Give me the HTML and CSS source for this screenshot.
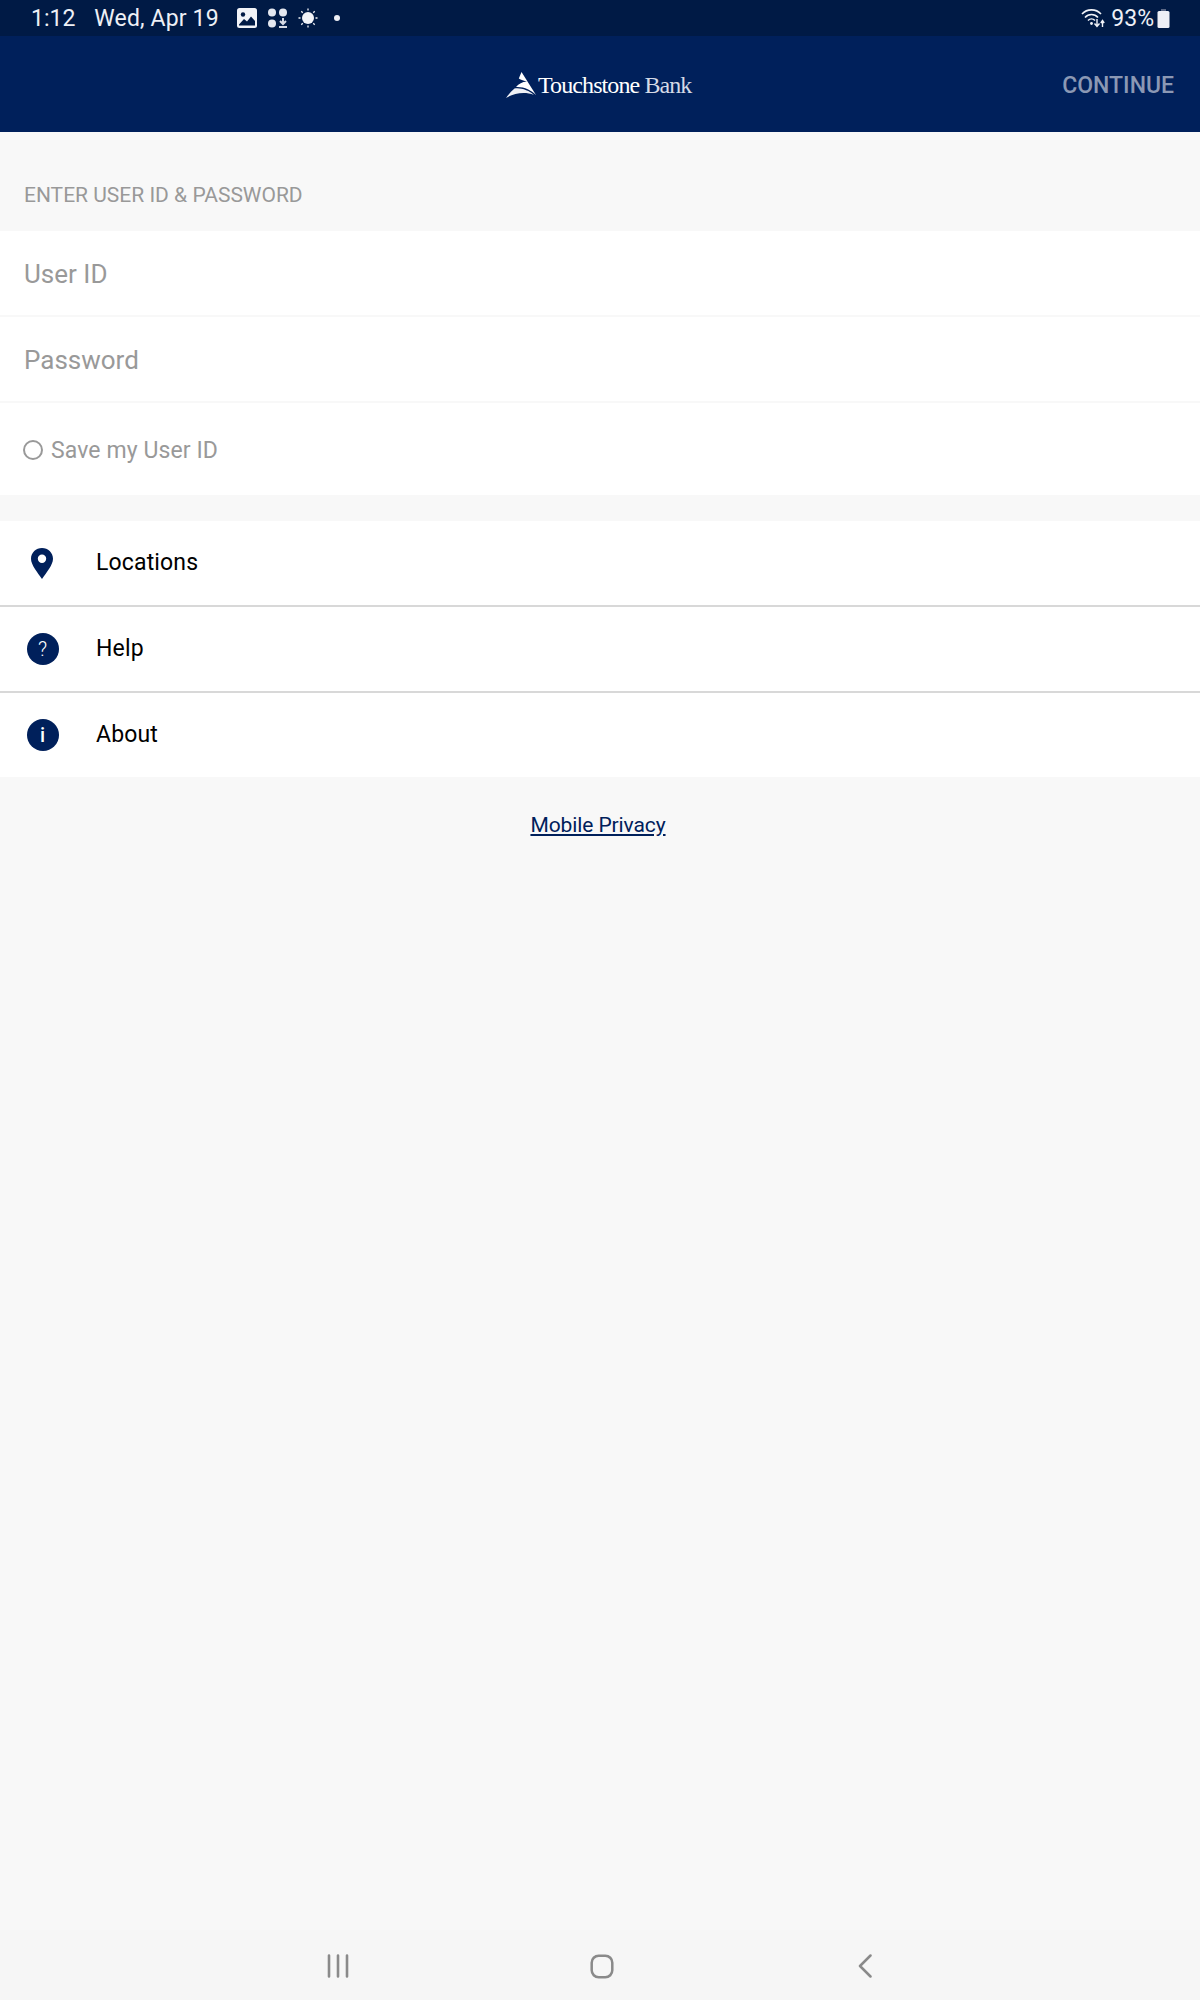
FILE: index.html
```html
<!DOCTYPE html>
<html>
<head>
    <title>Touchstone Bank</title>
    <link rel="stylesheet" href="styles.css">
</head>
<body>
    <div class="status-bar">
        <span class="status-time">1:12</span>
        <span class="status-date">Wed, Apr 19</span>
        <svg class="status-icon icon-gallery" width="20" height="20" viewBox="0 0 20 20">
            <rect width="20" height="20" rx="2.5" fill="#f1f3f8"/>
            <circle cx="6" cy="6.5" r="2.2" fill="#001a45"/>
            <path d="M2 16.5 L7 11 L10 13.5 L14 8.5 L18 13 V17.5 H2 Z" fill="#001a45"/>
        </svg>
        <svg class="status-icon icon-apps" width="21" height="20" viewBox="0 0 21 20">
            <circle cx="5" cy="4.5" r="4" fill="#e4e8f0"/>
            <circle cx="16" cy="4.5" r="4" fill="#e4e8f0"/>
            <circle cx="5" cy="15.5" r="4" fill="#e4e8f0"/>
            <path d="M16 10 V15 M13 13 L16 16 L19 13 M12 19 H20" stroke="#d5dae5" stroke-width="2" fill="none"/>
        </svg>
        <svg class="status-icon icon-sun" width="20" height="20" viewBox="0 0 20 20">
            <circle cx="10" cy="10" r="6" fill="#f1f3f8"/>
            <path d="M10 0.5 V2.5 M10 17.5 V19.5 M0.5 10 H2.5 M17.5 10 H19.5 M3.3 3.3 L4.7 4.7 M15.3 15.3 L16.7 16.7 M3.3 16.7 L4.7 15.3 M15.3 4.7 L16.7 3.3" stroke="#f1f3f8" stroke-width="1.3"/>
        </svg>
        <span class="status-dot"></span>
        <span class="status-spacer"></span>
        <svg class="status-icon" width="24" height="20" viewBox="0 0 24 20">
            <path d="M1 6 C6 0.5 15 0.5 20 6 M4 9.5 C7.5 5.5 13.5 5.5 17 9.5 M7 12.5 C9 10.5 12 10.5 14 12.5" stroke="#f1f3f8" stroke-width="1.6" fill="none"/>
            <circle cx="10.5" cy="15.5" r="1.4" fill="#f1f3f8"/>
            <path d="M16 11 V18 M13.5 15.5 L16 18.5 L18.5 15.5" stroke="#f1f3f8" stroke-width="1.4" fill="none"/>
            <path d="M21.5 19 V13 M19.8 15 L21.5 12.5 L23.2 15" stroke="#f1f3f8" stroke-width="1.4" fill="none"/>
        </svg>
        <span class="status-battery-text">93%</span>
        <svg class="status-icon" width="13" height="19" viewBox="0 0 13 19">
            <path d="M4 0 H9 V2 H4 Z" fill="#5a6785"/>
            <rect x="0.5" y="2" width="12" height="17" rx="1.5" fill="#eef0f6"/>
        </svg>
    </div>

    <header class="app-header">
        <div class="logo">
            <svg width="30" height="26" viewBox="0 0 30 26">
                <path d="M15.500 0 L30 23 C25 18 18 14.500 10 15 C13 11.500 17 9.500 21 9.800 C18 8.500 15 8 12.800 6.500 Z" fill="#ffffff"/>
                <path d="M8.500 16.500 C15 15.500 23 18.500 28 23 C19 19.500 8 21 0 26 C2 23 5 19.500 8.500 16.500 Z" fill="#eef0f6"/>
            </svg>
            <span class="logo-text">Touchstone <span class="logo-bank">Bank</span></span>
        </div>
        <span class="continue">CONTINUE</span>
    </header>

    <main class="content">
        <div class="section-label">ENTER USER ID &amp; PASSWORD</div>

        <div class="login-form">
            <div class="field">User ID</div>
            <div class="field">Password</div>
            <div class="save-row">
                <span class="radio"></span>
                <span>Save my User ID</span>
            </div>
        </div>

        <div class="menu">
            <div class="menu-row">
                <span class="menu-icon">
                    <svg width="22" height="31" viewBox="0 0 22 31">
                        <path fill-rule="evenodd" d="M11 0 C17 0 22 4.700 22 10.800 C22 17 15.500 24.500 11 31 C6.500 24.500 0 17 0 10.800 C0 4.700 5 0 11 0 Z M11 6.500 A4.200 4.200 0 1 0 11 14.900 A4.200 4.200 0 1 0 11 6.500 Z" fill="#00205b"/>
                    </svg>
                </span>
                <span>Locations</span>
            </div>
            <div class="menu-row">
                <span class="menu-icon"><span class="round-icon">?</span></span>
                <span>Help</span>
            </div>
            <div class="menu-row">
                <span class="menu-icon"><span class="round-icon icon-info">i</span></span>
                <span>About</span>
            </div>
        </div>

        <div class="privacy"><a href="#">Mobile Privacy</a></div>
    </main>

    <div class="nav-bar">
        <svg class="nav-recent" width="22" height="24" viewBox="0 0 22 24">
            <path d="M2 1.500 V22.500 M11 1.500 V22.500 M20 1.500 V22.500" stroke="#8a8a8a" stroke-width="2.600" stroke-linecap="round"/>
        </svg>
        <svg class="nav-home" width="24" height="25" viewBox="0 0 24 25">
            <rect x="1.700" y="1.700" width="20.600" height="21.600" rx="7" fill="none" stroke="#8a8a8a" stroke-width="2.500"/>
        </svg>
        <svg class="nav-back" width="14" height="24" viewBox="0 0 14 24">
            <path d="M12.500 1.500 L2 12 L12.500 22.500" fill="none" stroke="#8a8a8a" stroke-width="2.500" stroke-linecap="round" stroke-linejoin="round"/>
        </svg>
    </div>
</body>
</html>
```

FILE: styles.css
```css
body {
    margin: 0;
    height: 2000px;
    display: flex;
    flex-direction: column;
    font-family: Roboto, sans-serif;
    background-color: #f8f8f8;
}
.status-bar {
    height: 36px;
    padding: 0 30px 0 31px;
    display: flex;
    align-items: center;
    background-color: #001a45;
    color: #eef0f6;
    font-size: 23px;
}
.status-time {
    margin-right: 19px;
}
.status-date {
    letter-spacing: 0.15px;
}
.status-icon {
    display: block;
}
.icon-gallery {
    margin-left: 18px;
}
.icon-apps {
    margin-left: 10px;
}
.icon-sun {
    margin-left: 10px;
}
.status-dot {
    width: 6px;
    height: 6px;
    margin-left: 16px;
    border-radius: 50%;
    background-color: #eef0f6;
}
.status-spacer {
    flex: 1;
}
.status-battery-text {
    margin: 0 3px 0 6px;
}
.app-header {
    height: 96px;
    padding: 0 26px;
    display: flex;
    align-items: center;
    justify-content: flex-end;
    position: relative;
    background-color: #00205b;
}
.logo {
    position: absolute;
    left: 506px;
    top: 36px;
    display: flex;
    align-items: flex-end;
    color: #ffffff;
}
.logo-text {
    margin-left: 2px;
    font-family: "Liberation Serif", serif;
    font-size: 24px;
    line-height: 26px;
    letter-spacing: -0.9px;
}
.logo-bank {
    color: #d5dae6;
}
.continue {
    color: #8b98b4;
    font-size: 23px;
    font-weight: 500;
    padding-top: 2px;
}
.content {
    flex: 1;
}
.section-label {
    height: 99px;
    padding: 0 24px 24px;
    box-sizing: border-box;
    display: flex;
    align-items: flex-end;
    color: #999999;
    font-size: 21px;
    line-height: 24px;
}
.login-form {
    background-color: #ffffff;
}
.field {
    height: 82px;
    padding: 2px 24px 0;
    display: flex;
    align-items: center;
    border-bottom: 2px solid #f8f8f8;
    color: #999999;
    font-size: 26px;
}
.save-row {
    height: 90px;
    padding: 2px 23px 0;
    display: flex;
    align-items: center;
    gap: 8px;
    color: #999999;
    font-size: 23px;
    letter-spacing: 0.1px;
}
.radio {
    width: 16px;
    height: 16px;
    border: 2px solid #999999;
    border-radius: 50%;
}
.menu {
    margin-top: 26px;
    background-color: #ffffff;
}
.menu-row {
    height: 84px;
    display: flex;
    align-items: center;
    border-bottom: 2px solid #d8d8d8;
    color: #000000;
    font-size: 23px;
    letter-spacing: 0.15px;
}
.menu-row:last-child {
    border-bottom: none;
}
.menu-row > span:last-child {
    position: relative;
    top: -1px;
}
.menu-icon {
    width: 84px;
    margin-right: 12px;
    display: flex;
    justify-content: center;
}
.round-icon {
    width: 32px;
    height: 32px;
    margin-left: 1px;
    display: flex;
    align-items: center;
    justify-content: center;
    border-radius: 50%;
    background-color: #00205b;
    color: #ffffff;
    font-size: 20px;
    font-weight: 300;
}
.icon-info {
    font-weight: 500;
}
.privacy {
    margin-top: 36px;
    text-align: center;
    font-size: 21px;
    letter-spacing: -0.1px;
    padding-right: 4px;
}
.privacy a {
    color: #00205b;
}
.nav-bar {
    height: 70px;
    position: relative;
    flex-shrink: 0;
    background-color: #f6f6f6;
}
.nav-bar svg {
    position: absolute;
    top: 24px;
}
.nav-recent {
    left: 327px;
}
.nav-home {
    left: 590px;
}
.nav-back {
    left: 858px;
}
```
